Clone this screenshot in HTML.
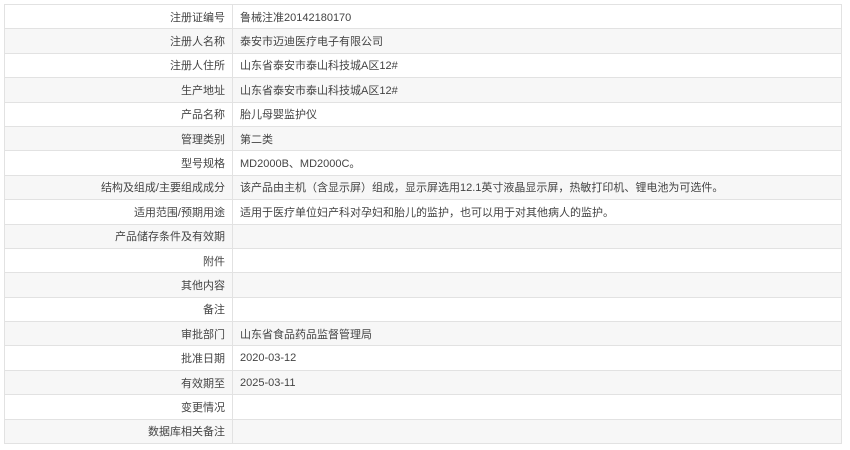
<!DOCTYPE html>
<html><head><meta charset="utf-8"><style>
body{margin:0;background:#fff;font-family:"Liberation Sans","Noto Sans CJK SC",sans-serif;font-size:11px;color:#444;}
table{position:absolute;left:4px;top:4px;width:838px;border-collapse:collapse;}
td{border:1px solid #e2e2e2;height:24.4px;padding:0 7px;box-sizing:border-box;white-space:nowrap;}
td.l{width:228px;text-align:right;}
tr:nth-child(even) td{background:#f7f7f7;}
</style></head><body>
<table>
<tr><td class="l">注册证编号</td><td>鲁械注准20142180170</td></tr>
<tr><td class="l">注册人名称</td><td>泰安市迈迪医疗电子有限公司</td></tr>
<tr><td class="l">注册人住所</td><td>山东省泰安市泰山科技城A区12#</td></tr>
<tr><td class="l">生产地址</td><td>山东省泰安市泰山科技城A区12#</td></tr>
<tr><td class="l">产品名称</td><td>胎儿母婴监护仪</td></tr>
<tr><td class="l">管理类别</td><td>第二类</td></tr>
<tr><td class="l">型号规格</td><td>MD2000B、MD2000C。</td></tr>
<tr><td class="l">结构及组成/主要组成成分</td><td>该产品由主机（含显示屏）组成，显示屏选用12.1英寸液晶显示屏，热敏打印机、锂电池为可选件。</td></tr>
<tr><td class="l">适用范围/预期用途</td><td>适用于医疗单位妇产科对孕妇和胎儿的监护，也可以用于对其他病人的监护。</td></tr>
<tr><td class="l">产品储存条件及有效期</td><td></td></tr>
<tr><td class="l">附件</td><td></td></tr>
<tr><td class="l">其他内容</td><td></td></tr>
<tr><td class="l">备注</td><td></td></tr>
<tr><td class="l">审批部门</td><td>山东省食品药品监督管理局</td></tr>
<tr><td class="l">批准日期</td><td>2020-03-12</td></tr>
<tr><td class="l">有效期至</td><td>2025-03-11</td></tr>
<tr><td class="l">变更情况</td><td></td></tr>
<tr><td class="l">数据库相关备注</td><td></td></tr>
</table>
</body></html>
